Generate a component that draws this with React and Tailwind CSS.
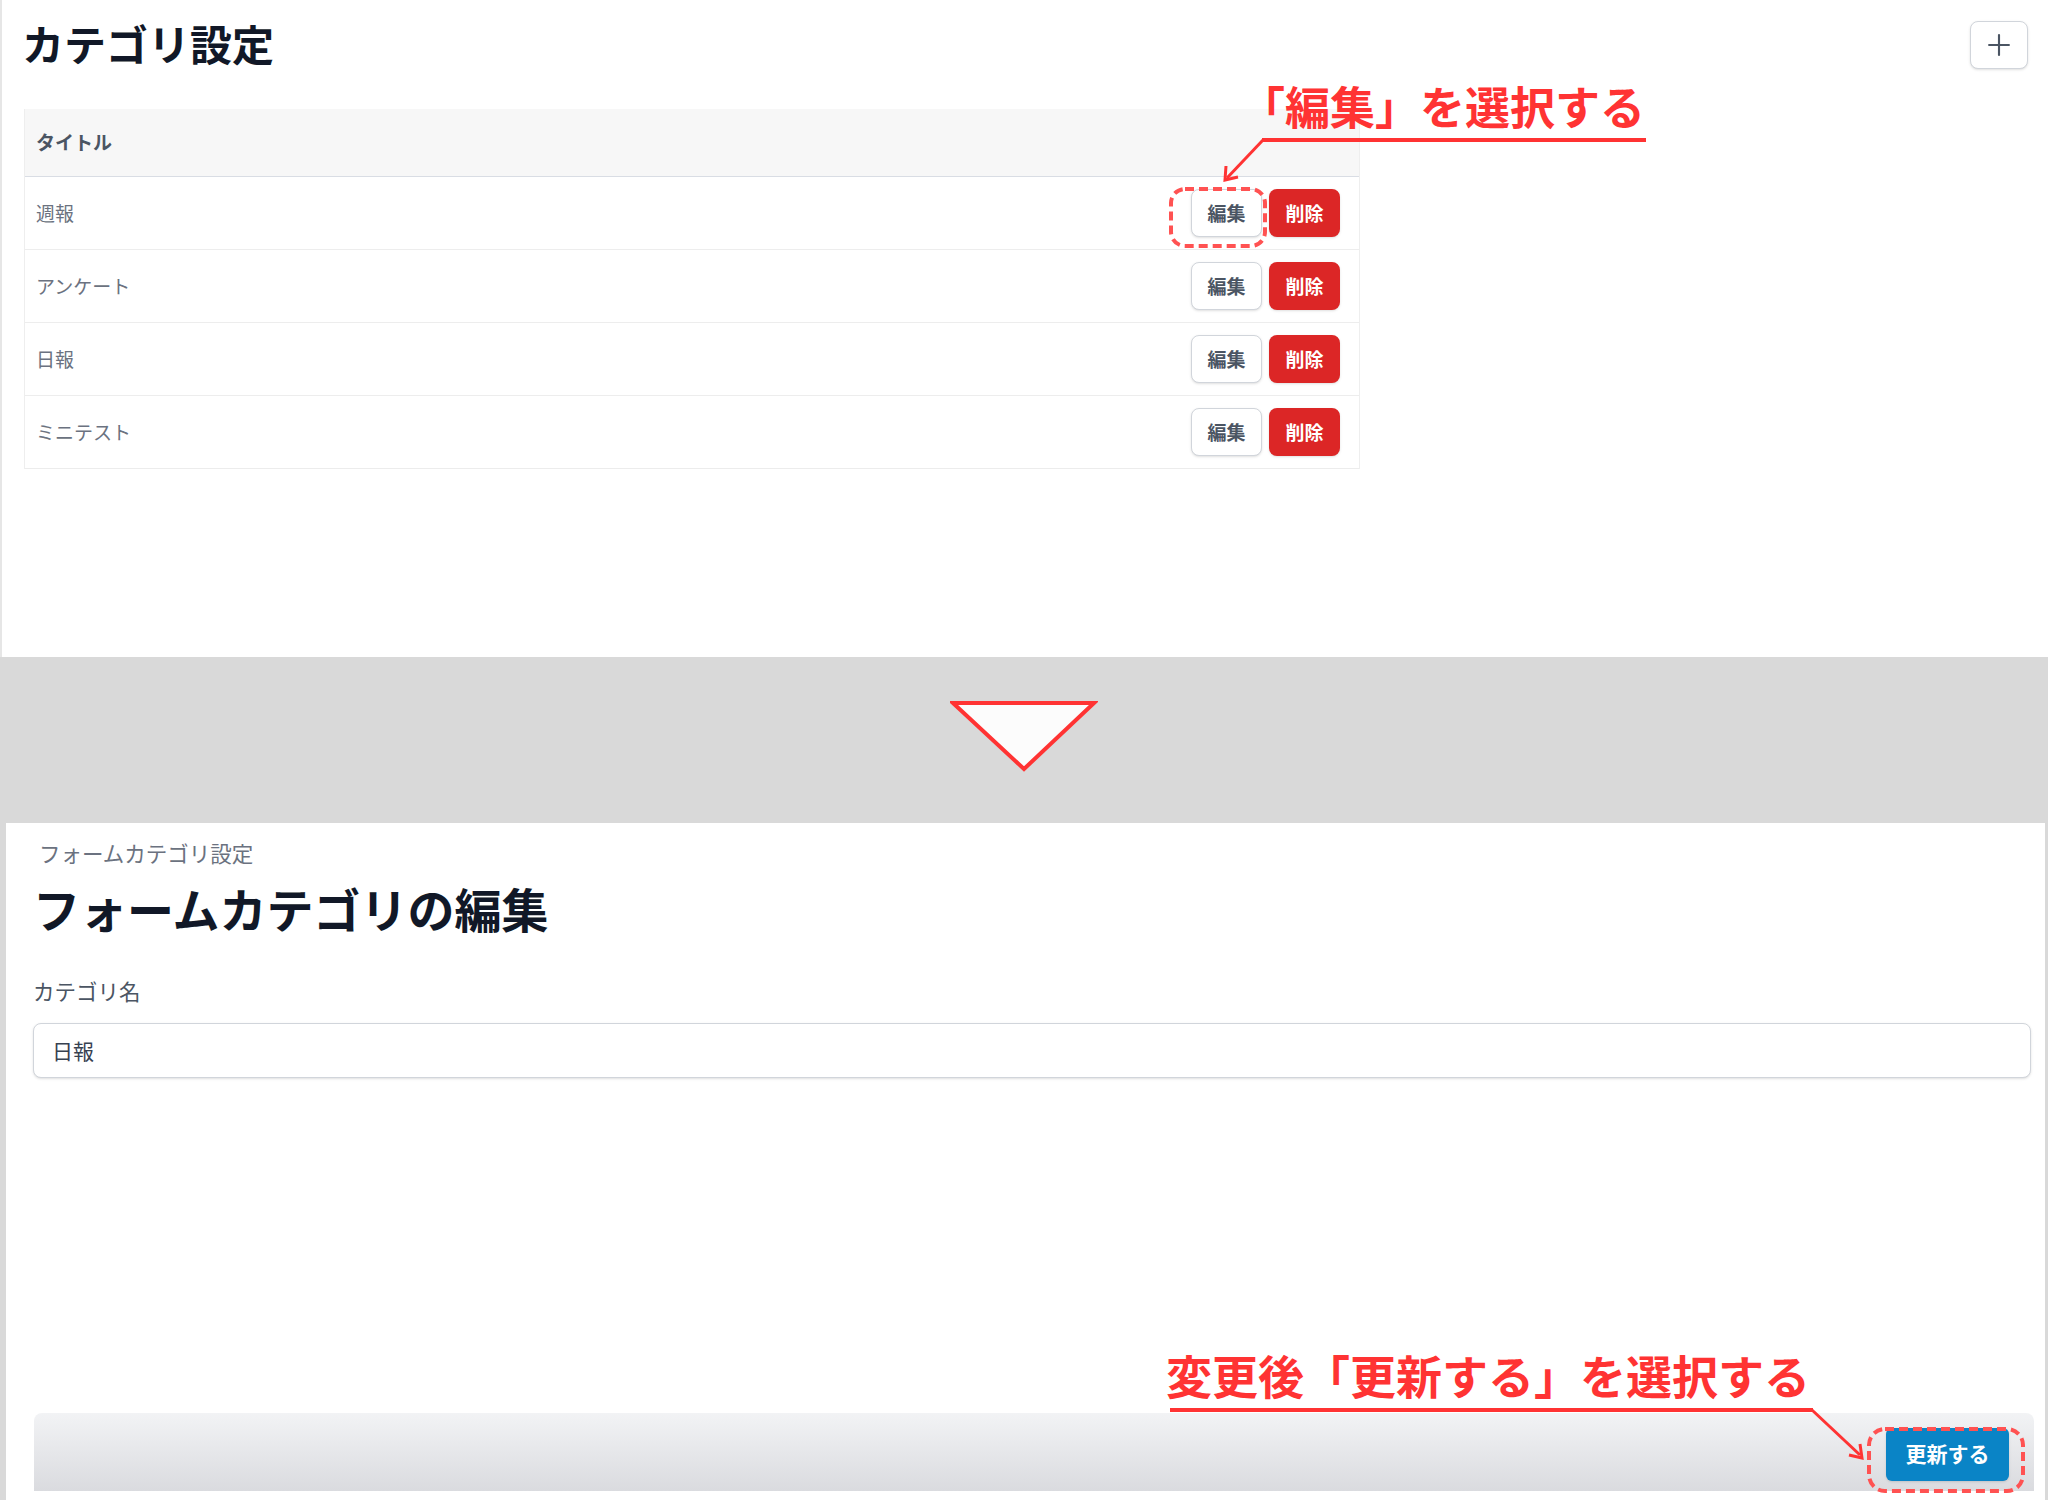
import React from "react";
import { Plus } from "lucide-react";

const FONT = { fontFamily: '"Noto Sans CJK JP", "Noto Sans", sans-serif' };

const rows = ["週報", "アンケート", "日報", "ミニテスト"];

function Row({ label, last }) {
  return (
    <div className={`flex h-[73px] items-center justify-between border-b ${last ? "border-[#ececec]" : "border-[#ededed]"} pl-[11px] pr-[19px]`}>
      <span className="text-[19px] text-[#6b7280]">{label}</span>
      <div className="flex items-center gap-[7px]">
        <button className="flex h-[48px] w-[71px] items-center justify-center rounded-lg border border-[#d1d5db] bg-white text-[19px] font-bold text-[#4b5563] shadow-sm">
          編集
        </button>
        <button className="flex h-[48px] w-[71px] items-center justify-center rounded-lg bg-[#dc2626] text-[19px] font-bold text-white shadow-sm">
          削除
        </button>
      </div>
    </div>
  );
}

export default function App() {
  return (
    <div className="relative h-[1500px] w-[2048px] overflow-hidden bg-[#d9d9d9]" style={FONT}>
      {/* top screenshot */}
      <section className="h-[657px] border-l-2 border-[#e6e6e6] bg-white pl-[22px] pr-[20px] pt-[18px]">
        <div className="flex items-start justify-between">
          <h1 className="ml-[-2px] text-[42px] font-bold leading-[50px] text-[#111827]">カテゴリ設定</h1>
          <button className="mt-[3px] flex h-[48px] w-[58px] items-center justify-center rounded-lg border border-[#d1d5db] bg-white text-[#4b5563] shadow-sm">
            <Plus size={34} strokeWidth={1.5} />
          </button>
        </div>
        <div className="mt-[40px] w-[1336px] border-x border-[#eeeeee]">
          <div className="flex h-[68px] items-center border-b border-[#d9dde4] bg-[#f7f7f7] pl-[11px]">
            <span className="text-[19px] font-bold text-[#4b5563]">タイトル</span>
          </div>
          {rows.map((r, i) => (
            <Row key={r} label={r} last={i === rows.length - 1} />
          ))}
        </div>
      </section>

      {/* arrow band */}
      <div className="flex h-[166px] justify-center pt-[43px]">
        <svg width="148" height="72" viewBox="0 0 148 72">
          <polygon points="3,3 144,3 74,69" fill="#fcfcfc" stroke="#ff3333" strokeWidth="4" strokeLinejoin="miter" />
        </svg>
      </div>

      {/* bottom screenshot */}
      <section className="ml-[6px] mr-[3px] flex h-[677px] flex-col bg-white pl-[27px] pr-[14px] pt-[15px]">
        <div className="ml-[6px] text-[21.5px] leading-[30px] text-[#6b7280]">フォームカテゴリ設定</div>
        <h2 className="ml-[0px] mt-[12px] text-[47px] font-bold leading-[56px] text-[#111827]">フォームカテゴリの編集</h2>
        <label className="mt-[40px] text-[21.5px] leading-[30px] text-[#4b5563]">カテゴリ名</label>
        <div className="mt-[17px] flex h-[55px] items-center rounded-lg border border-[#d1d5db] bg-white pl-[18px] shadow-sm">
          <span className="text-[21px] text-[#374151]">日報</span>
        </div>
        <div className="flex-1" />
        <div className="mb-[9px] ml-[1px] mr-[-3px] flex h-[78px] items-start justify-end rounded-tl-lg rounded-tr-lg bg-linear-to-b from-[#f2f3f5] to-[#dadbdf] pr-[25px] pt-[15px]">
          <button className="flex h-[53px] w-[123px] items-center justify-center rounded-md bg-[#0a84c6] pb-[2px] text-[21px] font-bold text-white shadow-sm">
            更新する
          </button>
        </div>
      </section>

      {/* annotations */}
      <div className="absolute left-[1240px] top-[83px] whitespace-nowrap text-[45px] font-bold leading-[45px] text-[#ff3333]">
        「編集」を選択する
      </div>
      <div className="absolute left-[1166px] top-[1351px] whitespace-nowrap text-[46px] font-bold leading-[46px] text-[#ff3333]">
        変更後「更新する」を選択する
      </div>
      <svg className="pointer-events-none absolute left-0 top-0" width="2048" height="1500" viewBox="0 0 2048 1500">
        {/* annotation 1 */}
        <line x1="1262" y1="140" x2="1646" y2="140" stroke="#ff3333" strokeWidth="4" />
        <line x1="1263" y1="140" x2="1227" y2="178" stroke="#ff3333" strokeWidth="3" />
        <polyline points="1226,166 1225,180 1238,177" fill="none" stroke="#ff3333" strokeWidth="3" />
        <rect x="1171" y="189" width="94" height="57" rx="14" fill="none" stroke="#ff5252" strokeWidth="4" strokeDasharray="9 5" />
        {/* annotation 2 */}
        <line x1="1170" y1="1410" x2="1813" y2="1410" stroke="#ff3333" strokeWidth="4" />
        <line x1="1812" y1="1410" x2="1860" y2="1455" stroke="#ff3333" strokeWidth="3" />
        <polyline points="1849,1455 1862,1458 1860,1444" fill="none" stroke="#ff3333" strokeWidth="3" />
        <rect x="1869" y="1429" width="154" height="62" rx="16" fill="none" stroke="#ff5252" strokeWidth="4" strokeDasharray="9 5" />
      </svg>
    </div>
  );
}
